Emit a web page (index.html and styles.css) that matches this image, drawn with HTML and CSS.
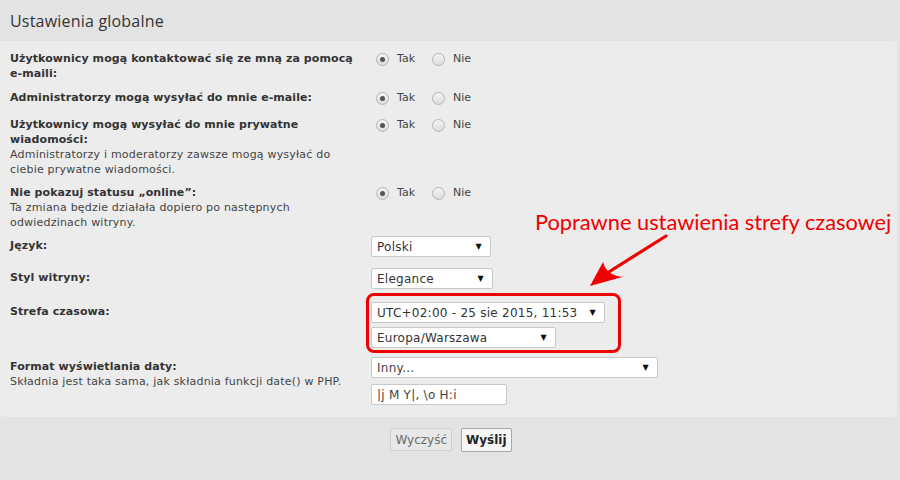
FILE: index.html
```html
<!DOCTYPE html>
<html lang="pl">
<head>
<meta charset="utf-8">
<title>Ustawienia globalne</title>
<link rel="stylesheet" href="styles.css">
</head>
<body>
<div class="page">
  <h1 class="title">Ustawienia globalne</h1>
  <div class="panel">
    <div class="row r1">
      <div class="label"><b>Użytkownicy mogą kontaktować się ze mną za pomocą e-maili:</b></div>
      <div class="control radios">
        <span class="radio checked"></span><span class="rl">Tak</span>
        <span class="radio"></span><span class="rl">Nie</span>
      </div>
    </div>
    <div class="row r2">
      <div class="label"><b>Administratorzy mogą wysyłać do mnie e-maile:</b></div>
      <div class="control radios">
        <span class="radio checked"></span><span class="rl">Tak</span>
        <span class="radio"></span><span class="rl">Nie</span>
      </div>
    </div>
    <div class="row r3">
      <div class="label"><b>Użytkownicy mogą wysyłać do mnie prywatne wiadomości:</b><span class="desc">Administratorzy i moderatorzy zawsze mogą wysyłać do ciebie prywatne wiadomości.</span></div>
      <div class="control radios">
        <span class="radio checked"></span><span class="rl">Tak</span>
        <span class="radio"></span><span class="rl">Nie</span>
      </div>
    </div>
    <div class="row r4">
      <div class="label"><b>Nie pokazuj statusu „online”:</b><span class="desc">Ta zmiana będzie działała dopiero po następnych odwiedzinach witryny.</span></div>
      <div class="control radios">
        <span class="radio checked"></span><span class="rl">Tak</span>
        <span class="radio"></span><span class="rl">Nie</span>
      </div>
    </div>
    <div class="row r5">
      <div class="label lab-sel"><b>Język:</b></div>
      <div class="control">
        <div class="select w-polski"><span>Polski</span><span class="arrow">▼</span></div>
      </div>
    </div>
    <div class="row r6">
      <div class="label lab-sel"><b>Styl witryny:</b></div>
      <div class="control">
        <div class="select w-eleg"><span>Elegance</span><span class="arrow">▼</span></div>
      </div>
    </div>
    <div class="row r7">
      <div class="label lab-sel"><b>Strefa czasowa:</b></div>
      <div class="control stack">
        <div class="select w-utc"><span>UTC+02:00 - 25 sie 2015, 11:53</span><span class="arrow">▼</span></div>
        <div class="select w-eur"><span>Europa/Warszawa</span><span class="arrow">▼</span></div>
      </div>
    </div>
    <div class="row r8">
      <div class="label lab-sel"><b>Format wyświetlania daty:</b><span class="desc">Składnia jest taka sama, jak składnia funkcji date() w PHP.</span></div>
      <div class="control stack stack-wide">
        <div class="select w-inny"><span class="muted">Inny...</span><span class="arrow">▼</span></div>
        <div class="input w-input">|j M Y|, \o H:i</div>
      </div>
    </div>
  </div>
  <div class="buttons">
    <button class="btn btn-reset">Wyczyść</button>
    <button class="btn btn-submit">Wyślij</button>
  </div>

  <div class="note">Poprawne ustawienia strefy czasowej</div>
  <svg class="arrow-svg" width="90" height="70" viewBox="0 0 90 70">
    <line x1="80" y1="6" x2="18" y2="45" stroke="#f00000" stroke-width="3.2" stroke-linecap="round"/>
    <path d="M4 56 L17 32 Q19 40 26 44 Q33 48 40 46 Z" fill="#f00000"/>
  </svg>
  <div class="redbox"></div>
</div>
</body>
</html>
```
FILE: styles.css
```css
html, body {
  margin: 0;
  padding: 0;
  background: #e3e3e3;
}
body {
  width: 900px;
  height: 480px;
  overflow: hidden;
  font-family: "DejaVu Sans", Verdana, sans-serif;
  font-size: 11px;
  color: #333;
}
.page {
  position: relative;
  width: 900px;
  height: 480px;
}
.title {
  margin: 0;
  height: 41px;
  box-sizing: border-box;
  padding: 10px 0 0 10px;
  font-family: "Open Sans", "Noto Sans", sans-serif;
  font-weight: 400;
  font-size: 16px;
  letter-spacing: 0.2px;
  line-height: 22px;
  color: #333;
}
.panel {
  width: 897px;
  box-sizing: border-box;
  background: #ececec;
  border-radius: 0 5px 5px 5px;
  padding: 10px 0 12px 10px;
  display: flex;
  flex-direction: column;
}
.row {
  display: flex;
  align-items: flex-start;
}
.r2 { margin-top: 9px; }
.r3 { margin-top: 12px; }
.r4 { margin-top: 8px; }
.r5 { margin-top: 6px; }
.r6 { margin-top: 11px; }
.r7 { margin-top: 13px; }
.r8 { margin-top: 9px; }
.label {
  width: 352px;
  line-height: 15px;
  color: #333;
}
.label b {
  display: block;
  font-weight: bold;
  letter-spacing: 0.08px;
  color: #333;
}
.desc {
  display: block;
  color: #444;
  font-size: 11px;
  letter-spacing: 0.2px;
}
.lab-sel { padding-top: 2px; }
.control {
  margin-left: 9px;
}
.radios {
  display: flex;
  align-items: center;
  height: 15px;
  margin-left: 14px;
}
.radio {
  width: 11px;
  height: 11px;
  border: 1px solid #b5b5b5;
  border-radius: 50%;
  background: linear-gradient(#f4f4f4, #dcdcdc);
  position: relative;
  box-sizing: content-box;
  margin-top: 2px;
}
.radio.checked::after {
  content: "";
  position: absolute;
  left: 3px;
  top: 3px;
  width: 5px;
  height: 5px;
  border-radius: 50%;
  background: #555;
}
.rl {
  margin-left: 8px;
  margin-right: 17px;
  color: #444;
}
.stack {
  display: flex;
  flex-direction: column;
  gap: 4px;
}
.stack-wide { gap: 6px; }
.select, .input {
  height: 21px;
  box-sizing: border-box;
  background: #fff;
  border: 1px solid #c8c8c8;
  border-radius: 2px;
  display: flex;
  align-items: center;
  justify-content: space-between;
  padding: 0 8px 0 5px;
  font-size: 12px;
  letter-spacing: 0.25px;
  color: #333;
}
.arrow {
  font-size: 8px;
  color: #111;
}
.muted { color: #444; }
.w-polski { width: 120px; }
.w-eleg { width: 122px; }
.w-utc { width: 234px; }
.w-eur { width: 185px; }
.w-inny { width: 287px; }
.w-input { width: 136px; color: #444; }
.buttons {
  display: flex;
  justify-content: center;
  gap: 9px;
  margin-top: 11px;
  padding-left: 2px;
}
.btn {
  font-family: "DejaVu Sans", Verdana, sans-serif;
  font-size: 12px;
  height: 23px;
  padding: 0 4px;
  border-radius: 2px;
  cursor: pointer;
}
.btn-reset {
  background: #e8e8e8;
  border: 1px solid #cfcfcf;
  color: #6a6a6a;
}
.btn-submit {
  background: #f6f6f6;
  border: 1px solid #a8a8a8;
  color: #222;
  font-weight: bold;
  height: 24px;
}
.note {
  position: absolute;
  left: 535px;
  top: 208px;
  font-family: "Lato", "Noto Sans", sans-serif;
  font-size: 21.8px;
  color: #f00000;
  white-space: nowrap;
}
.arrow-svg {
  position: absolute;
  left: 586px;
  top: 230px;
}
.redbox {
  position: absolute;
  left: 366px;
  top: 293px;
  width: 255px;
  height: 60px;
  box-sizing: border-box;
  border: 3px solid #f00000;
  border-radius: 8px;
}
```
